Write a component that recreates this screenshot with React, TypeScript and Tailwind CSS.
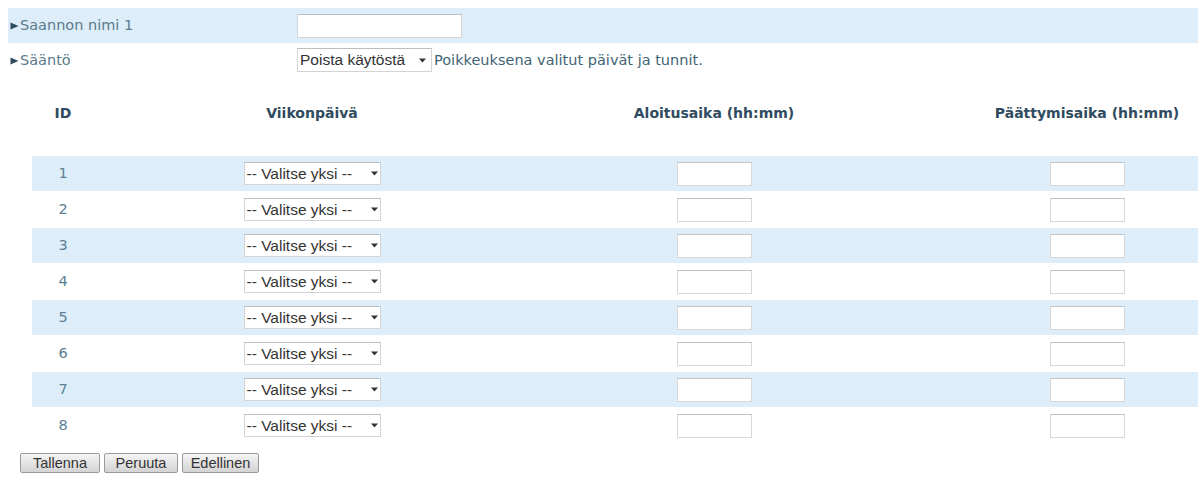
import { ReactNode } from 'react'

const rows = [1, 2, 3, 4, 5, 6, 7, 8]

function Caret() {
  return (
    <svg width="7" height="5" viewBox="0 0 7 5" className="shrink-0">
      <path d="M0 0.5 L7 0.5 L3.5 4.5 Z" fill="#333" />
    </svg>
  )
}

function Arrow() {
  return (
    <svg width="9" height="8" viewBox="0 0 9 8" className="shrink-0 mr-[1px]">
      <path d="M0.5 0.5 L8.5 4 L0.5 7.5 Z" fill="#2d4b5e" />
    </svg>
  )
}

function FakeSelect({ label, className }: { label: string; className: string }) {
  return (
    <div
      className={`flex items-center justify-between bg-white border border-[#d4d4d4] border-t-[#bdbdbd] pl-[2px] text-[15.5px] text-[#333] font-['Liberation_Sans',Arial,sans-serif] ${className}`}
    >
      <span className="whitespace-nowrap">{label}</span>
      <Caret />
    </div>
  )
}

function TimeInput() {
  return <div className="w-[75px] h-[24px] bg-white border border-[#d8d8d8] border-t-[#c2c2c2]" />
}

function Btn({ children, w }: { children: ReactNode; w: string }) {
  return (
    <button
      className={`${w} h-[20px] border border-[#9a9a9a] rounded-[2px] bg-gradient-to-b from-[#f4f4f4] to-[#d4d4d4] text-[14.5px] leading-none text-[#333] font-['Liberation_Sans',Arial,sans-serif]`}
    >
      {children}
    </button>
  )
}

export default function App() {
  return (
    <div className="w-[1201px] h-[481px] bg-white pt-[8px] font-['DejaVu_Sans',Verdana,sans-serif] text-[14.5px]">
      {/* Rule name */}
      <div className="ml-[8px] w-[1190px] h-[35px] bg-[#ddeefa] flex items-center">
        <div className="w-[289px] pl-[2px] text-[#5b7a8b] flex items-center">
          <Arrow />
          Saannon nimi 1
        </div>
        <div className="w-[165px] h-[24px] bg-white border border-[#d6d6d6] border-t-[#c0c0c0]" />
      </div>

      {/* Rule */}
      <div className="ml-[8px] mt-[5px] h-[24px] flex items-center">
        <div className="w-[289px] pl-[2px] pt-[1px] text-[#5b7a8b] flex items-center">
          <Arrow />
          Sääntö
        </div>
        <FakeSelect label="Poista käytöstä" className="w-[135px] h-[24px] pr-[5px]" />
        <span className="ml-[2px] pt-[2px] text-[#3f6475]">Poikkeuksena valitut päivät ja tunnit.</span>
      </div>

      {/* Header */}
      <div className="ml-[32px] mt-[24px] h-[34px] grid grid-cols-[62px_436px_368px_300px] items-center font-bold text-[14px] text-[#2f4b60]">
        <div className="text-center">ID</div>
        <div className="text-center">Viikonpäivä</div>
        <div className="text-center">Aloitusaika (hh:mm)</div>
        <div className="text-center pl-[78px]">Päättymisaika (hh:mm)</div>
      </div>

      {/* Rows */}
      <div className="ml-[32px] mt-[26px] w-[1166px] flex flex-col gap-[1px]">
        {rows.map((n) => (
          <div
            key={n}
            className={`h-[35px] grid grid-cols-[62px_436px_368px_300px] items-center ${n % 2 === 1 ? 'bg-[#ddeefa]' : 'bg-white'}`}
          >
            <div className="text-center text-[#5b7f93]">{n}</div>
            <div className="flex justify-center">
              <FakeSelect label="-- Valitse yksi --" className="w-[137px] h-[23px] pr-[2px]" />
            </div>
            <div className="flex justify-center">
              <TimeInput />
            </div>
            <div className="flex justify-center pl-[78px]">
              <TimeInput />
            </div>
          </div>
        ))}
      </div>

      {/* Buttons */}
      <div className="ml-[20px] mt-[10px] flex gap-[4px]">
        <Btn w="w-[80px]">Tallenna</Btn>
        <Btn w="w-[74px]">Peruuta</Btn>
        <Btn w="w-[77px]">Edellinen</Btn>
      </div>
    </div>
  )
}
